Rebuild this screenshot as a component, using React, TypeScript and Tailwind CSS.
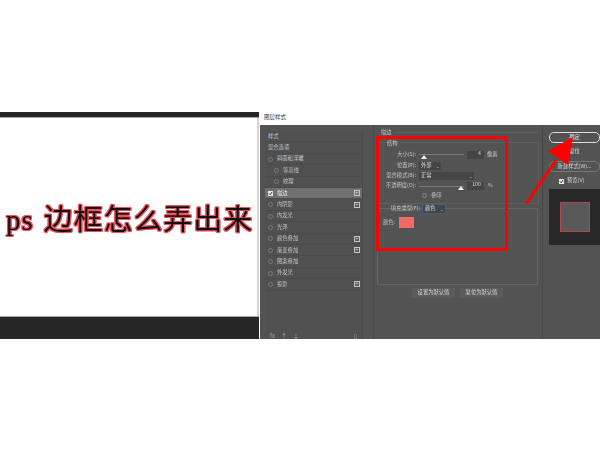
const font = "[font-family:'Noto_Sans_CJK_SC','Liberation_Sans',sans-serif]";

const rows: { t: string; check?: boolean; on?: boolean; indent?: boolean; plus?: boolean; hi?: boolean }[] = [
  { t: "样式" },
  { t: "混合选项" },
  { t: "斜面和浮雕", check: true },
  { t: "等高线", check: true, indent: true },
  { t: "纹理", check: true, indent: true },
  { t: "描边", check: true, on: true, plus: true, hi: true },
  { t: "内阴影", check: true, plus: true },
  { t: "内发光", check: true },
  { t: "光泽", check: true },
  { t: "颜色叠加", check: true, plus: true },
  { t: "渐变叠加", check: true, plus: true },
  { t: "图案叠加", check: true },
  { t: "外发光", check: true },
  { t: "投影", check: true, plus: true },
];

function Box({ on }: { on?: boolean }) {
  return on ? (
    <span className="w-[5px] h-[5px] bg-[#e8e8e8] shrink-0 flex items-center justify-center">
      <svg width="5" height="5" viewBox="0 0 5 5"><path d="M1 2.5 L2.2 3.8 L4 1" stroke="#333" strokeWidth="1" fill="none" /></svg>
    </span>
  ) : (
    <span className="w-[5px] h-[5px] rounded-full border border-[#7c7c7c] shrink-0" />
  );
}

function ListRow({ r }: { r: (typeof rows)[number] }) {
  return (
    <div className={`h-[11.42px] flex items-center border-b border-[#4b4b4b] leading-none ${r.hi ? "bg-[#707070] text-[#eeeeee]" : "text-[#c4c4c4]"}`}>
      <span className={r.indent ? "w-[8px]" : "w-[2px]"} />
      {r.check ? <span className="w-[1px]" /> : null}
      {r.check ? <Box on={r.on} /> : null}
      <span className={`${r.check ? "ml-[4px]" : "ml-[1px]"} whitespace-nowrap`}>{r.t}</span>
      <span className="flex-1" />
      {r.plus ? (
        <span className="w-[6px] h-[6px] mr-[2px] border border-[#c8c8c8] text-[#dddddd] text-[6px] leading-[4px] text-center">+</span>
      ) : null}
    </div>
  );
}

function Label({ w, children }: { w: string; children: string }) {
  return <span className={`${w} text-right whitespace-nowrap shrink-0`}>{children}</span>;
}

function Select({ w, text, blue }: { w: string; text: string; blue?: boolean }) {
  return (
    <span className={`${w} h-[8px] flex items-center justify-between px-[2px] bg-[#454545] text-[#dddddd] whitespace-nowrap ${blue ? "outline outline-[#3f5f8f]" : ""}`}>
      <span>{text}</span>
      <span className="text-[4px]">⌄</span>
    </span>
  );
}

function Slider({ w, left }: { w: string; left: string }) {
  return (
    <span className={`${w} relative h-[8px] flex items-center`}>
      <span className="w-full h-px bg-[#7a7a7a]" />
      <span className={`absolute ${left} bottom-0 w-0 h-0 border-l-[3px] border-r-[3px] border-b-[4px] border-l-transparent border-r-transparent border-b-[#f0f0f0]`} />
    </span>
  );
}

export default function App() {
  return (
    <div className={`w-[600px] h-[450px] bg-white overflow-hidden relative ${font}`}>
      <div className="h-[112px]" />
      <div className="flex h-[227px]">
        <div className="w-[259px] shrink-0 flex flex-col">
          <div className="h-[6px] bg-[#262626] border-b border-[#a8a8a8]" />
          <div className="flex-1 bg-white border-r-2 border-[#d4d4d4] flex items-center pl-[6px] pt-[6px]">
            <span className="text-[29px] leading-none whitespace-nowrap text-[#111111] [font-family:'Liberation_Serif','Noto_Sans_CJK_SC',serif] font-normal tracking-[0.9px] [word-spacing:2px] blur-[0.3px] [text-shadow:1.3px_0_0.6px_#f7505c,-1.3px_0_0.6px_#f7505c,0_1.3px_0.6px_#f7505c,0_-1.3px_0.6px_#f7505c,1px_1px_0.6px_#f7505c,-1px_1px_0.6px_#f7505c,1px_-1px_0.6px_#f7505c,-1px_-1px_0.6px_#f7505c]">
              ps 边框怎么弄出来
            </span>
          </div>
          <div className="h-[23px] bg-[#262626] border-t border-[#a8a8a8]" />
        </div>
        <div className="flex-1 flex flex-col ml-px blur-[0.45px]">
          <div className="h-[13px] bg-white text-[5.5px] leading-none text-[#333333] pl-[4px] pt-[3px]">图层样式</div>
          <div className="flex-1 bg-[#535353] flex text-[5.3px] leading-none text-[#c8c8c8]">
            <div className="w-[98px] ml-[5px] mt-[6px] shrink-0 flex flex-col border-r border-[#484848] bg-[#505050]">
              {rows.map((r) => <ListRow key={r.t} r={r} />)}
              <div className="flex-1 flex items-end justify-between px-[5px] text-[6px] text-[#aaaaaa]">
                <span className="flex gap-[6px]"><span>fx</span><span>↑</span><span>↓</span></span>
                <span>▯</span>
              </div>
            </div>
            <div className="w-[170px] ml-[10px] shrink-0 flex flex-col border-l border-r border-[#484848] pl-[3px] pr-[4px]">
              <div className="h-[13px] flex items-center gap-[3px] mt-px pl-[4px]">
                <span>描边</span>
                <span className="flex-1 h-px bg-[#606060]" />
              </div>
              <div className="h-[62px] mt-[3px] -mb-[1px] ml-[1px] mr-[-1px] border border-[#5e5e5e]">
                <div className="h-[9px] -mt-[4px] pl-[8px] flex items-center">结构</div>
                <div className="h-[11px] flex items-center mt-[1px] gap-[3px] -ml-[1px]">
                  <Label w="w-[38px]">大小(S):</Label>
                  <Slider w="w-[45px]" left="left-[2px]" />
                  <span className="w-[17px] h-[8px] bg-[#444444] text-right pr-[3px] text-[#dddddd]">4</span>
                  <span>像素</span>
                </div>
                <div className="h-[11px] flex items-center gap-[3px] -ml-[1px]">
                  <Label w="w-[38px]">位置(P):</Label>
                  <Select w="w-[22px]" text="外部" />
                </div>
                <div className="h-[10px] flex items-center gap-[3px] -ml-[1px]">
                  <Label w="w-[38px]">混合模式(B):</Label>
                  <Select w="w-[55px]" text="正常" />
                </div>
                <div className="h-[10px] flex items-center gap-[3px] -ml-[1px]">
                  <Label w="w-[38px]">不透明度(O):</Label>
                  <Slider w="w-[45px]" left="right-0" />
                  <span className="w-[17px] h-[8px] bg-[#444444] text-right pr-[3px] text-[#dddddd]">100</span>
                  <span className="ml-[1px]">%</span>
                </div>
                <div className="h-[9px] flex items-center pl-[43px] gap-[4px]">
                  <span className="w-[5px] h-[5px] rounded-full border border-[#8a8a8a]" />
                  <span>叠印</span>
                </div>
              </div>
              <div className="h-[77px] mt-[5px] border border-[#656565] flex flex-col">
                <div className="h-[14px] -mt-[7px] flex items-center gap-[3px] pl-[5px]">
                  <Label w="w-[37px]">填充类型(F):</Label>
                  <Select w="w-[22px]" text="颜色" blue />
                </div>
                <div className="flex items-center gap-[2px] pl-[5px] mt-[1px]">
                  <span className="w-[14px]">颜色:</span>
                  <span className="w-[15px] h-[11px] bg-[#f46868]" />
                </div>
              </div>
              <div className="flex justify-center gap-[5px] mt-[3px]">
                <span className="w-[43px] h-[10px] bg-[#5c5c5c] flex items-center justify-center text-[#d8d8d8]">设置为默认值</span>
                <span className="w-[43px] h-[10px] bg-[#5c5c5c] flex items-center justify-center text-[#d8d8d8]">复位为默认值</span>
              </div>
            </div>
            <div className="flex-1 ml-[6px] mt-[7px] flex flex-col">
              <div className="h-[11px] rounded-[5px] border border-[#dddddd] flex items-center justify-center text-[#eeeeee]">确定</div>
              <div className="h-[11px] mt-[3px] flex items-center justify-center text-[#dddddd]">复位</div>
              <div className="h-[11px] mt-[4px] rounded-[5px] border border-[#777777] flex items-center justify-center whitespace-nowrap text-[#dddddd]">新建样式(W)...</div>
              <div className="h-[10px] mt-[4px] flex items-center pl-[10px] gap-[3px] text-[#dddddd]">
                <Box on />
                <span>预览(V)</span>
              </div>
              <div className="h-[56px] mt-[3px] bg-[#282828] flex items-center justify-center">
                <span className="w-[30px] h-[30px] bg-[#595959] border border-[#b04a4e]" />
              </div>
            </div>
          </div>
        </div>
      </div>
      <div className="absolute left-[376px] top-[136px] w-[132px] h-[115px] border-[3px] border-[#ff0000]" />
      <svg className="absolute left-0 top-0" width="600" height="450" viewBox="0 0 600 450">
        <path d="M526 204 L556 160" stroke="#ff0000" strokeWidth="3" />
        <path d="M573 137 L548 151 L568 165 Z" fill="#ff0000" />
      </svg>
    </div>
  );
}
